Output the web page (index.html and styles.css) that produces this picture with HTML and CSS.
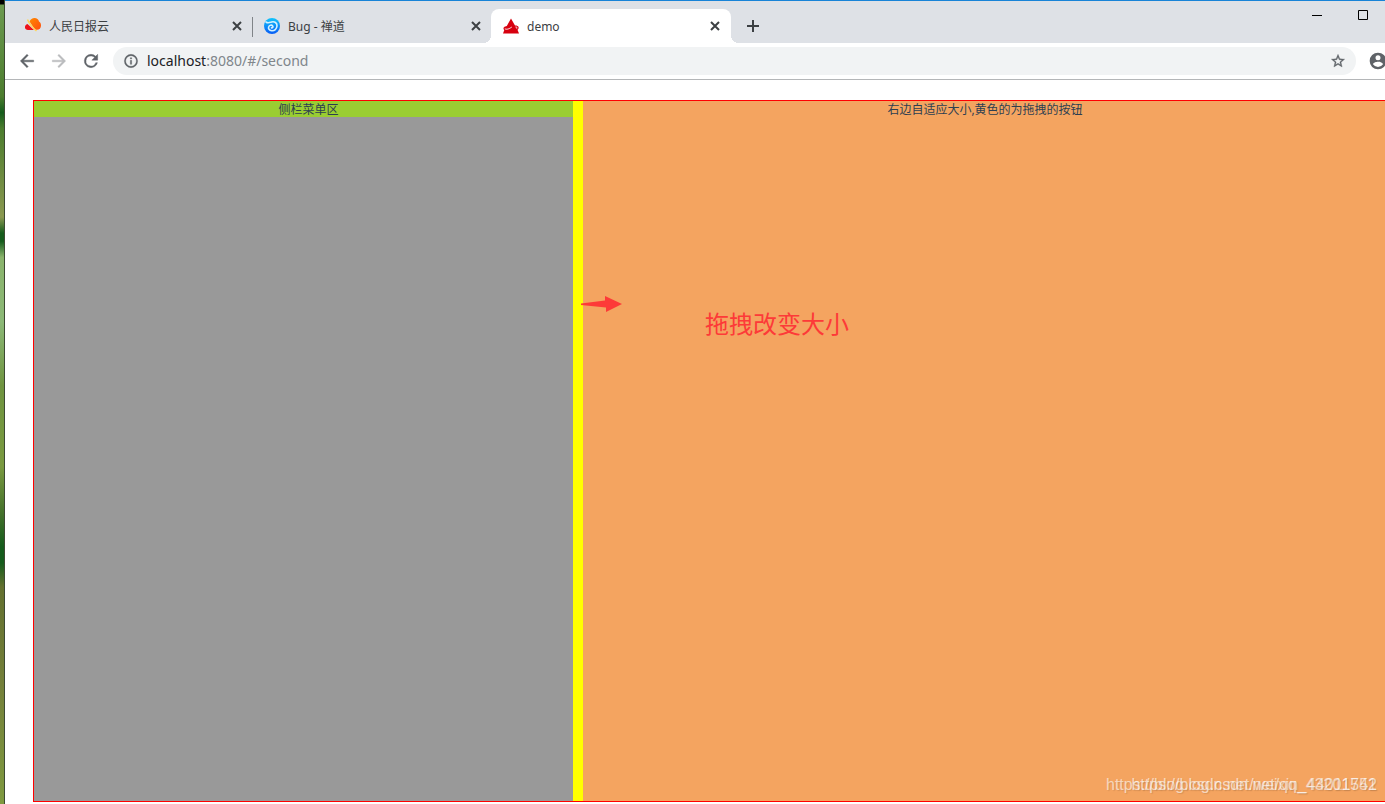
FILE: index.html
```
<!DOCTYPE html>
<html lang="zh-CN">
<head>
    <meta charset="UTF-8">
    <meta name="viewport" content="width=device-width, initial-scale=1.0">
    <title>demo</title>
    <link rel="stylesheet" href="styles.css">
</head>
<body>
    <div class="wallpaper"></div>
    <div class="window">
        <header class="tab-strip">
            <div class="tab">
                <svg class="favicon" viewBox="0 0 16 16">
                    <defs>
                        <linearGradient id="cloud" x1="0" y1="0" x2="1" y2="1">
                            <stop offset="0" stop-color="#ff8a00"/>
                            <stop offset="1" stop-color="#ff4d0d"/>
                        </linearGradient>
                    </defs>
                    <path d="M2.500 6C.800 6.300 0 7.700 0 9.200 0 11 1.300 12 3 12h6z" fill="#ee1219"/>
                    <path d="M4.500 3.500C5.500 1.200 7.300 0 9.500 0c2.300 0 4.100 1.400 4.500 3.500 1.300.700 2 2.100 2 3.900 0 2.600-1.700 4.300-4 4.300H10z" fill="url(#cloud)"/>
                    <path d="M2.500 1.500C4 5 6 8.500 11.500 13" fill="none" stroke="#ffd75a" stroke-width="1.500"/>
                </svg>
                <span class="title">人民日报云</span>
                <button class="close" aria-label="关闭"><svg viewBox="0 0 10 10"><path d="M1 1l8 8M9 1L1 9"/></svg></button>
            </div>
            <div class="tab separated">
                <svg class="favicon" viewBox="0 0 16 16">
                    <defs>
                        <linearGradient id="sea" x1="0" y1="0" x2="0" y2="1">
                            <stop offset="0" stop-color="#12c4fb"/>
                            <stop offset="1" stop-color="#075cf5"/>
                        </linearGradient>
                    </defs>
                    <circle cx="8" cy="8" r="8" fill="url(#sea)"/>
                    <path d="M2 4c2 1.500 3.500.500 5.500 0 3-.800 5.800.800 5.500 4-.300 3-2.500 5-5.300 4.700-2.400-.200-3.800-2.200-3-4 .700-1.700 3-2 4-.800.700 1 0 2-1.200 2" fill="none" stroke="#d4f2ff" stroke-width="1.600" stroke-linecap="round"/>
                </svg>
                <span class="title">Bug - 禅道</span>
                <button class="close" aria-label="关闭"><svg viewBox="0 0 10 10"><path d="M1 1l8 8M9 1L1 9"/></svg></button>
            </div>
            <div class="tab active">
                <svg class="favicon" viewBox="0 0 16 16">
                    <path d="M8 .500L12 7.500c1.500-.200 3 .300 3.500 1.500.400 1.200-.300 2.200-1 2.700l1.500 3.800H0l1.300-3.500C0 11 .300 9.500 1.500 8.700L3.800 8z" fill="#d7000f"/>
                    <path d="M1.800 10.500c1 1.500 4.500.500 7-1.500M12.500 9c1.500 0 2 .800 1.200 1.600" fill="none" stroke="#fff" stroke-width=".900"/>
                </svg>
                <span class="title">demo</span>
                <button class="close" aria-label="关闭"><svg viewBox="0 0 10 10"><path d="M1 1l8 8M9 1L1 9"/></svg></button>
            </div>
            <button class="new-tab" aria-label="新标签页"><svg viewBox="0 0 12 12"><path d="M6 0v12M0 6h12"/></svg></button>
            <div class="window-controls">
                <button aria-label="最小化"><svg viewBox="0 0 10 10"><path d="M0 5.500h10"/></svg></button>
                <button aria-label="最大化"><svg viewBox="0 0 10 10"><path d="M.5.500h9v9h-9z"/></svg></button>
            </div>
        </header>
        <nav class="toolbar">
            <button aria-label="后退"><svg viewBox="0 0 24 24"><path d="M20 11H7.830l5.590-5.590L12 4l-8 8 8 8 1.410-1.410L7.830 13H20z"/></svg></button>
            <button aria-label="前进" disabled><svg viewBox="0 0 24 24"><path d="M12 4l-1.410 1.410L16.170 11H4v2h12.170l-5.580 5.590L12 20l8-8z"/></svg></button>
            <button aria-label="刷新"><svg viewBox="0 0 24 24"><path d="M17.650 6.350A7.960 7.960 0 0 0 12 4a8 8 0 1 0 7.730 10h-2.080A6 6 0 1 1 12 6c1.660 0 3.140.690 4.220 1.780L13 11h7V4z"/></svg></button>
            <div class="address">
                <svg class="info" viewBox="0 0 24 24"><path d="M11 7h2v2h-2zm0 4h2v6h-2zm1-9a10 10 0 1 0 0 20 10 10 0 0 0 0-20zm0 18a8 8 0 1 1 0-16 8 8 0 0 1 0 16z"/></svg>
                <span class="url"><span class="host">localhost</span>:8080/#/second</span>
                <button class="star" aria-label="收藏"><svg viewBox="0 0 24 24"><path d="M22 9.240l-7.190-.620L12 2 9.190 8.630 2 9.240l5.460 4.730L5.820 21 12 17.270 18.180 21l-1.630-7.030zM12 15.400l-3.760 2.270 1-4.280-3.320-2.880 4.380-.380L12 6.100l1.710 4.040 4.380.380-3.320 2.880 1 4.280z"/></svg></button>
            </div>
            <button class="profile" aria-label="用户"><svg viewBox="0 0 24 24"><path d="M12 2a10 10 0 1 0 0 20 10 10 0 0 0 0-20zm0 3a3 3 0 1 1 0 6 3 3 0 0 1 0-6zm0 14.200a7.200 7.200 0 0 1-6-3.220c.030-1.990 4-3.080 6-3.080s5.970 1.090 6 3.080a7.200 7.200 0 0 1-6 3.220z"/></svg></button>
        </nav>
        <main class="page">
            <div class="box">
                <aside class="left">
                    <div class="menu">侧栏菜单区</div>
                    <div class="resize"></div>
                </aside>
                <section class="right">右边自适应大小,黄色的为拖拽的按钮</section>
            </div>
            <svg class="arrow" viewBox="0 0 41 16"><path d="M0 7.500L24 4.500V0l17 8-16 8v-4.500L0 9z"/></svg>
            <div class="note">拖拽改变大小</div>
            <div class="watermark">https://blog.csdn.net/weixin_44011751</div>
            <div class="watermark">https://blog.csdn.net/qq_43201542</div>
        </main>
    </div>
</body>
</html>
```

FILE: styles.css
```
* {
    box-sizing: border-box;
}
body {
    margin: 0;
    height: 100vh;
    display: flex;
    overflow: hidden;
    background: #fff;
    font-family: "Noto Sans", "Noto Sans CJK SC", sans-serif;
    font-size: 12px;
    color: #3c4043;
}
button {
    display: flex;
    align-items: center;
    justify-content: center;
    padding: 0;
    border: 0;
    background: none;
}
.wallpaper {
    width: 5px;
    border-right: 1px solid #3c4a32;
    background: linear-gradient(#000 0, #000 4px, #6c9a50 5px, #4c7d2e 12%, #155c1c 14%, #4c7d2e 16%, #8a9850 27%, #155c1c 29%, #155c1c 30%, #8ab46c 32%, #8cb977 40%, #6f9440 48%, #7a9a40 58%, #42702a 64%, #155c1c 68%, #155c1c 70%, #63702f 73%, #74803a 85%, #7f9a40 100%);
}
.window {
    flex: 1;
    min-width: 0;
    display: flex;
    flex-direction: column;
    border-top: 1px solid #1883d7;
}
.tab-strip {
    display: flex;
    align-items: flex-end;
    height: 42px;
    padding-left: 8px;
    background: #dee1e6;
}
.tab {
    position: relative;
    display: flex;
    align-items: center;
    width: 239px;
    height: 34px;
    padding: 0 7px 0 12px;
}
.tab.separated::before {
    content: "";
    position: absolute;
    left: 0;
    top: 8px;
    width: 1px;
    height: 20px;
    background: #808488;
}
.tab.active {
    width: 240px;
    padding-right: 8px;
    border-radius: 8px 8px 0 0;
    background: #fff;
}
/* feet of the active tab */
.tab.active::before,
.tab.active::after {
    content: "";
    position: absolute;
    bottom: 0;
    width: 8px;
    height: 8px;
}
.tab.active::before {
    left: -8px;
    background: radial-gradient(circle at 0 0, transparent 8px, #fff 8px);
}
.tab.active::after {
    right: -8px;
    background: radial-gradient(circle at 100% 0, transparent 8px, #fff 8px);
}
.favicon {
    width: 16px;
    height: 16px;
}
.title {
    flex: 1;
    margin-left: 8px;
    padding-top: 2px;
    line-height: 16px;
}
.close {
    width: 16px;
    height: 16px;
}
.close svg {
    width: 10px;
    height: 10px;
}
.close svg,
.new-tab svg {
    fill: none;
    stroke: #3c4043;
    stroke-width: 2;
}
.new-tab {
    width: 28px;
    height: 34px;
    margin-left: 8px;
}
.new-tab svg {
    width: 12px;
    height: 12px;
}
.window-controls {
    display: flex;
    align-self: flex-start;
    margin-left: auto;
    margin-right: -1px;
}
.window-controls button {
    width: 46px;
    height: 28px;
}
.window-controls svg {
    width: 10px;
    height: 10px;
    fill: none;
    stroke: #000;
}
.toolbar {
    display: flex;
    align-items: center;
    height: 37px;
    padding-left: 6px;
    border-bottom: 1px solid #b4b6b8;
    background: #fff;
}
.toolbar button {
    flex: none;
    width: 32px;
    height: 32px;
}
.toolbar svg {
    width: 20px;
    height: 20px;
    fill: #5f6368;
    stroke: #5f6368;
    stroke-width: .5;
}
.toolbar button:disabled svg {
    fill: #babcbe;
    stroke: #babcbe;
}
.address {
    flex: 1;
    display: flex;
    align-items: center;
    height: 28px;
    margin: 0 6px;
    padding: 0 2px 0 10px;
    border-radius: 14px;
    background: #f1f3f4;
}
.address .info {
    width: 16px;
    height: 16px;
}
.address .star svg {
    width: 16px;
    height: 16px;
}
.url {
    flex: 1;
    margin-left: 8px;
    padding-bottom: 2px;
    font-size: 14px;
    color: #80868b;
}
.host {
    color: #202124;
}
.toolbar .profile {
    margin-right: -9px;
}
.profile svg {
    stroke: none;
}
.page {
    position: relative;
    flex: 1;
    display: flex;
    padding: 20px 0 2px 28px;
}
.box {
    flex: 1;
    display: flex;
    margin-right: -3px;
    border: 1px solid #f00;
    line-height: 18px;
    text-align: center;
    color: #2c3e50;
}
.left {
    position: relative;
    width: 549px;
    background: #999;
}
.menu {
    height: 16px;
    background: #9acd32;
}
.resize {
    position: absolute;
    top: 0;
    right: 0;
    width: 10px;
    height: 100%;
    background: #ff0;
    cursor: w-resize;
}
.right {
    flex: 1;
    background: #f4a460;
}
.arrow {
    position: absolute;
    left: 576px;
    top: 216px;
    width: 41px;
    height: 16px;
    fill: #fd3a38;
}
.note {
    position: absolute;
    left: 700px;
    top: 228px;
    font-size: 24px;
    line-height: 32px;
    color: #fd3a38;
}
.watermark {
    position: absolute;
    right: 8px;
    bottom: 10px;
    font-family: "Liberation Sans", sans-serif;
    font-size: 16px;
    line-height: 18px;
    color: rgba(255, 255, 255, .6);
    text-shadow: 1px 1px 1px rgba(120, 80, 50, .2);
}
```
